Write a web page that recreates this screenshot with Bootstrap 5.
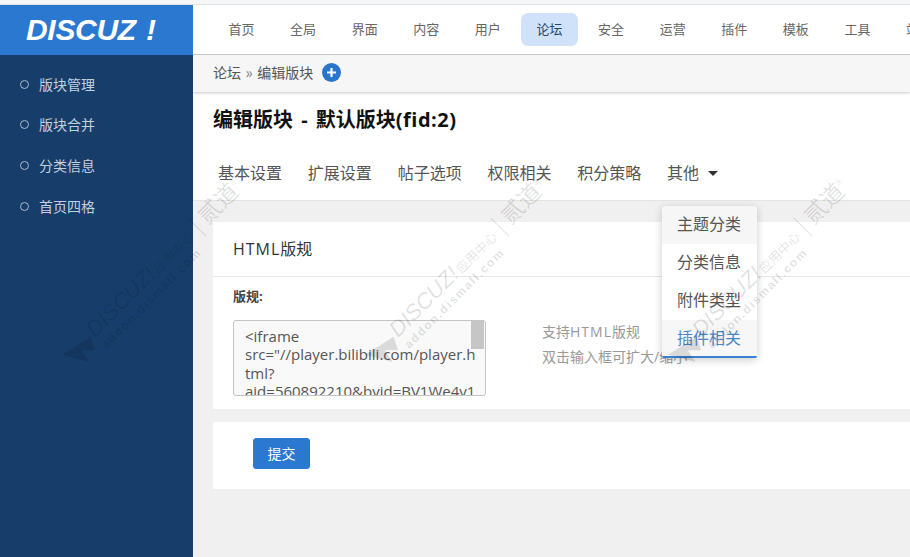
<!DOCTYPE html>
<html lang="zh">
<head>
<meta charset="utf-8">
<title>编辑版块</title>
<link rel="stylesheet" href="https://cdn.jsdelivr.net/npm/bootstrap@5.3.0/dist/css/bootstrap.min.css">
<style>
html,body{height:100%;overflow:hidden}
body{width:910px;height:557px;position:relative;background:#f0f0f0;font-family:"Open Sans","Noto Sans CJK SC",sans-serif;color:#444}
.top-strip{height:5px;background:#f4f6f8;border-bottom:1px solid #e2e2e2}
.shell{height:552px}
.side{width:193px;background:#173e6b;flex:none}
.brand{height:50px;background:#2a78cf;color:#fff;font:italic 700 30px/50px "Liberation Sans",sans-serif;padding-left:26px;letter-spacing:-.3px}
.brand-bang{margin-left:10px}
.side-list{padding-top:9px}
.side-link{height:40.6px;color:#c3d0df;font-size:14px;padding-left:20px;gap:10px}
.side-dot{width:9px;height:9px;border:1px solid #aab9cb;border-radius:50%}
.main-area{min-width:0;overflow:hidden}
.top-nav{height:50px;background:#fff;border-bottom:1px solid #d0d0d0;padding:8px 0 0 20px;gap:4.6px;flex:none;white-space:nowrap}
.nav-pill{width:57px;height:33px;flex:none;font-size:13px;color:#666;border-radius:7px;line-height:32px;text-align:center}
.nav-pill-on{background:#cfe2fa;color:#24476f}
.crumbs{height:37px;background:#f6f6f6;box-shadow:0 1px 3px rgba(0,0,0,.22);padding:0 0 2px 20px;font-size:14px;color:#555;gap:9px;position:relative;flex:none}
.crumb-sep{color:#888;margin:0 1px}
.head-zone{height:109px;background:#fff;border-bottom:1px solid #e4e4e4;flex:none}
.page-ttl{font-size:20px;font-weight:700;color:#111;line-height:28px;padding:14px 0 0 20px;margin:0;word-spacing:3px}
.ttl-latin{letter-spacing:.5px}
.tab-row{padding:27px 0 0 25px;gap:25.8px;font-size:16px;color:#555;line-height:24px;margin-right:-20px}
.tab-caret{display:inline-block;margin-left:9px;vertical-align:3px;border-top:5px solid #333;border-left:5px solid transparent;border-right:5px solid transparent}
.body-zone{padding:21px 0 0 20px;position:relative;flex:1}
.panel{background:#fff}
.panel-hd{height:55px;line-height:54px;padding-left:20px;font-size:16px;color:#333;border-bottom:1px solid #e8e8e8}
.wide-latin{letter-spacing:1px}
.panel-bd{height:132px;padding:11px 0 0 20px}
.field-lbl{font-size:13px;font-weight:700;color:#444;line-height:16px;margin-bottom:16px}
.code-wrap{width:253px;height:76px;flex:none}
.code-box{height:76px;padding:6px 7px 0 11px;font-size:15px;line-height:18.4px;color:#555;background:#f9f9f9;border:1px solid #c4c4c4;border-radius:3px;resize:none;overflow:hidden;box-shadow:none;font-family:"Open Sans",sans-serif}
.code-thumb{position:absolute;right:2px;top:1px;width:13px;height:28px;background:#c6c6c6}
.field-tip{font-size:14px;line-height:25px;color:#999;margin-top:-1px;padding:0 0 0 56px;white-space:nowrap}
.panel-foot{height:67px;margin-top:13px;padding:16px 0 0 40px}
.save-btn{width:57px;height:31px;padding:0;font-size:14px;background:#2a78cf;border:1px solid #2a78cf;border-radius:3px;color:#fff}
.drop{position:absolute;left:662px;top:206px;width:95px;background:#fff;box-shadow:0 2px 8px rgba(0,0,0,.2);border-radius:4px 4px 2px 2px;z-index:5;overflow:hidden}
.drop-it{height:38px;line-height:37px;padding-left:15px;font-size:16px;color:#555}
.drop-hover{background:#f6f6f6}
.drop-on{background:#f7f7f7;color:#4a86c8;border-bottom:2px solid #3a80d0}
.wm{position:absolute;top:0;width:0;height:0;z-index:9;pointer-events:none}
.wm-a{left:-303px}.wm-b{left:0}.wm-c{left:303px}
.wm-plane{position:absolute;left:365px;top:333px;width:34px;height:31px}
.wm-text{position:absolute;left:393px;top:333px;transform-origin:0 0;transform:rotate(-45deg) translateY(-16px);white-space:nowrap;color:rgba(0,0,0,.12);line-height:20px}
.wm-logo{font:italic 400 22px/20px "Liberation Sans",sans-serif}
.wm-cn{font-size:13px;margin-left:2px}
.wm-bar{display:inline-block;width:1px;height:26px;background:rgba(0,0,0,.12);margin:0 8px;vertical-align:-7px}
.wm-dao{font-size:23px}
.wm-reg{font-size:8px;vertical-align:10px}
.wm-url{font:700 12px/14px "Liberation Sans",sans-serif;letter-spacing:1.6px;margin-top:-2px}
</style>
</head>
<body>
<div class="top-strip"></div>
<div class="shell d-flex">
  <aside class="side">
    <div class="brand">DISCUZ<span class="brand-bang">!</span></div>
    <div class="side-list">
      <div class="side-link d-flex align-items-center"><span class="side-dot"></span><span>版块管理</span></div>
      <div class="side-link d-flex align-items-center"><span class="side-dot"></span><span>版块合并</span></div>
      <div class="side-link d-flex align-items-center"><span class="side-dot"></span><span>分类信息</span></div>
      <div class="side-link d-flex align-items-center"><span class="side-dot"></span><span>首页四格</span></div>
    </div>
  </aside>
  <main class="main-area flex-grow-1 d-flex flex-column">
    <nav class="top-nav d-flex">
      <div class="nav-pill">首页</div><div class="nav-pill">全局</div><div class="nav-pill">界面</div><div class="nav-pill">内容</div><div class="nav-pill">用户</div><div class="nav-pill nav-pill-on">论坛</div><div class="nav-pill">安全</div><div class="nav-pill">运营</div><div class="nav-pill">插件</div><div class="nav-pill">模板</div><div class="nav-pill">工具</div><div class="nav-pill">站长</div>
    </nav>
    <div class="crumbs d-flex align-items-center">
      <span>论坛 <span class="crumb-sep">»</span> 编辑版块</span>
      <svg width="19" height="19" viewBox="0 0 19 19" aria-hidden="true"><circle cx="9.5" cy="9.5" r="9.5" fill="#2a75cc"/><path d="M9.5 5v9M5 9.5h9" stroke="#fff" stroke-width="2.2"/></svg>
    </div>
    <section class="head-zone">
      <h1 class="page-ttl">编辑版块 - 默认版块<span class="ttl-latin">(fid:2)</span></h1>
      <div class="tab-row d-flex">
        <span>基本设置</span><span>扩展设置</span><span>帖子选项</span><span>权限相关</span><span>积分策略</span><span>其他<i class="tab-caret"></i></span>
      </div>
    </section>
    <section class="body-zone">
      <div class="panel">
        <div class="panel-hd"><span class="wide-latin">HTML</span>版规</div>
        <div class="panel-bd">
          <div class="field-lbl">版规:</div>
          <div class="d-flex">
            <div class="code-wrap position-relative">
              <textarea class="form-control code-box" readonly>&lt;iframe src="//player.bilibili.com/player.html?aid=560892210&amp;bvid=BV1We4y1o7Gz&amp;cid=205126388&amp;page=1" scrolling="no" border="0" frameborder="no" framespacing="0" allowfullscreen="true"&gt;&lt;/iframe&gt;</textarea>
              <div class="code-thumb"></div>
            </div>
            <div class="field-tip">支持<span class="wide-latin">HTML</span>版规<br>双击输入框可扩大/缩小</div>
          </div>
        </div>
      </div>
      <div class="panel panel-foot">
        <button type="button" class="btn save-btn">提交</button>
      </div>
    </section>
  </main>
</div>

<div class="drop">
  <div class="drop-it drop-hover">主题分类</div>
  <div class="drop-it">分类信息</div>
  <div class="drop-it">附件类型</div>
  <div class="drop-it drop-on">插件相关</div>
</div>

<div class="wm wm-a">
  <svg class="wm-plane" viewBox="0 0 38 32" aria-hidden="true"><path d="M0 23 32 3 37 18 22 18 31 31Z" fill="rgba(0,0,0,.12)"/></svg>
  <div class="wm-text"><div><span class="wm-logo">DISCUZ!</span><span class="wm-cn">应用中心</span><i class="wm-bar"></i><span class="wm-dao">贰道</span><span class="wm-reg">®</span></div><div class="wm-url">addon.dismall.com</div></div>
</div>
<div class="wm wm-b">
  <svg class="wm-plane" viewBox="0 0 38 32" aria-hidden="true"><path d="M0 23 32 3 37 18 22 18 31 31Z" fill="rgba(0,0,0,.12)"/></svg>
  <div class="wm-text"><div><span class="wm-logo">DISCUZ!</span><span class="wm-cn">应用中心</span><i class="wm-bar"></i><span class="wm-dao">贰道</span><span class="wm-reg">®</span></div><div class="wm-url">addon.dismall.com</div></div>
</div>
<div class="wm wm-c">
  <svg class="wm-plane" viewBox="0 0 38 32" aria-hidden="true"><path d="M0 23 32 3 37 18 22 18 31 31Z" fill="rgba(0,0,0,.12)"/></svg>
  <div class="wm-text"><div><span class="wm-logo">DISCUZ!</span><span class="wm-cn">应用中心</span><i class="wm-bar"></i><span class="wm-dao">贰道</span><span class="wm-reg">®</span></div><div class="wm-url">addon.dismall.com</div></div>
</div>
<script src="https://cdn.jsdelivr.net/npm/bootstrap@5.3.0/dist/js/bootstrap.bundle.min.js"></script>
</body>
</html>
